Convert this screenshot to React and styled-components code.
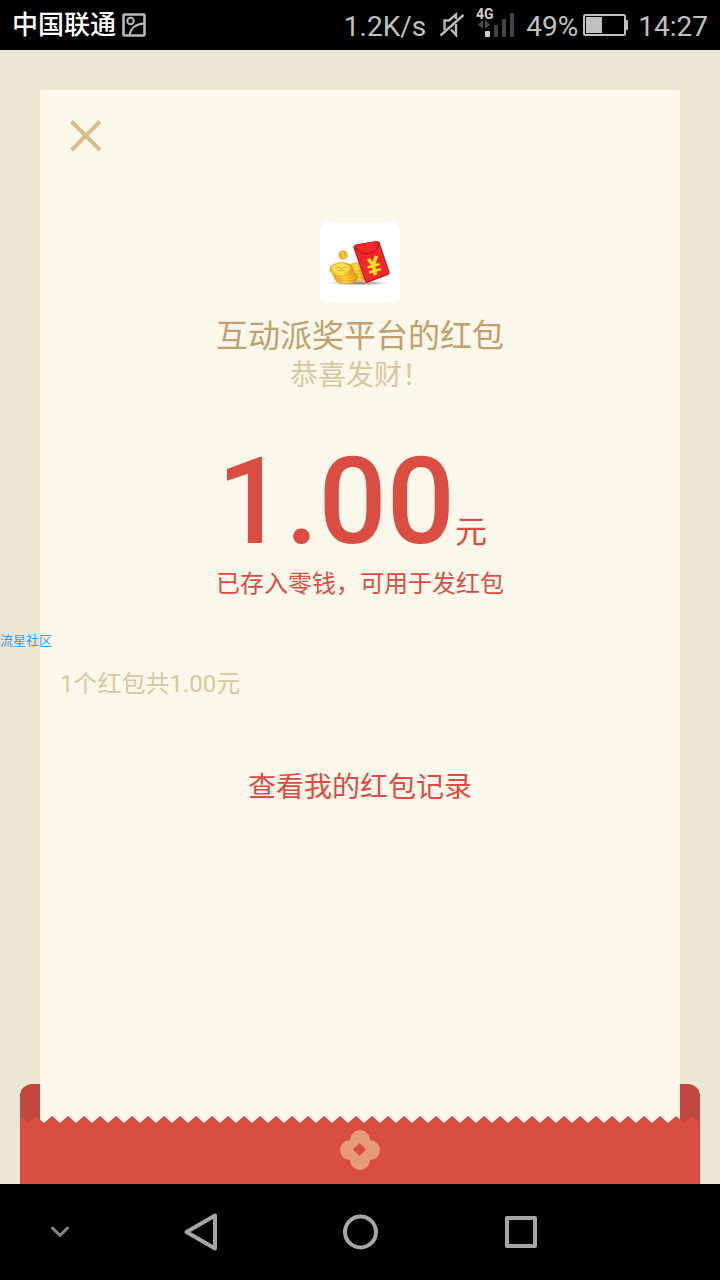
import React from 'react';
import styled, { createGlobalStyle } from 'styled-components';

const GlobalStyle = createGlobalStyle`
  *, *::before, *::after { box-sizing: border-box; }
  body {
    margin: 0;
    background: #000;
    font-family: Roboto, "Noto Sans CJK SC", sans-serif;
  }
  button { font: inherit; }
`;

const Screen = styled.div`
  position: relative;
  min-height: 100vh;
  display: flex;
  flex-direction: column;
  background: #ede6d3;
`;

const StatusBar = styled.header`
  height: 50px;
  padding: 0 12px;
  display: flex;
  align-items: center;
  justify-content: space-between;
  background: #000;
  color: #c0c0c0;
  font-size: 28px;
  line-height: 32px;
  white-space: nowrap;
`;

const StatusGroup = styled.div`
  display: flex;
  align-items: center;
  gap: ${(p) => p.$gap}px;
`;

const Carrier = styled.span`
  color: #fff;
  font-size: 26px;
  font-weight: 500;
`;

const StatusText = styled.span`
  padding-top: 4px;
`;

const BatteryGroup = styled.div`
  display: flex;
  align-items: center;
  gap: 5px;
`;

const Glyph = styled.svg`
  display: block;
  flex: none;
`;

const Main = styled.main`
  flex: 1;
  display: flex;
  flex-direction: column;
  padding-top: 40px;
`;

const Card = styled.section`
  flex: 1;
  margin: 0 40px;
  padding: 26px 20px 0;
  display: flex;
  flex-direction: column;
  align-items: center;
  background: #fbf7ea;
`;

const CloseButton = styled.button`
  align-self: flex-start;
  width: 40px;
  height: 40px;
  margin-left: 6px;
  padding: 0;
  border: 0;
  background: none;
  cursor: pointer;
`;

const Avatar = styled.div`
  width: 80px;
  height: 80px;
  margin-top: 66px;
  border-radius: 8px;
  overflow: hidden;
  background: #fff;
`;

const Title = styled.h1`
  margin: 14px 0 0;
  font-size: 32px;
  line-height: 40px;
  font-weight: 400;
  color: #c0a06e;
`;

const Greeting = styled.p`
  margin: 0;
  font-size: 28px;
  line-height: 40px;
  color: #dac7a1;
`;

const Amount = styled.p`
  margin: 46px 0 0;
  padding-right: 16px;
  display: flex;
  align-items: baseline;
  color: #da4d43;
`;

const AmountValue = styled.span`
  font-size: 120px;
  line-height: 120px;
  font-weight: 500;
`;

const AmountUnit = styled.span`
  font-size: 32px;
  line-height: 32px;
`;

const Notice = styled.p`
  margin: 2px 0 0;
  font-size: 24px;
  line-height: 40px;
  color: #da4d43;
`;

const Summary = styled.p`
  align-self: stretch;
  margin: 60px 0 0;
  font-size: 24px;
  line-height: 40px;
  color: #dac7a1;
`;

const RecordsLink = styled.a`
  margin-top: 64px;
  font-size: 28px;
  line-height: 40px;
  color: #da4d43;
  text-decoration: none;
`;

const Envelope = styled.div`
  margin: 0 20px;
  padding-top: 32px;
  border-radius: 12px 12px 0 0;
  background: linear-gradient(
    to right,
    #c1483f 20px,
    #fbf7ea 20px,
    #fbf7ea calc(100% - 20px),
    #c1483f calc(100% - 20px)
  );
`;

const EnvelopeFront = styled.div`
  height: 61px;
  padding-top: 7px;
  display: flex;
  justify-content: center;
  background: #da4d43;
`;

const NavBar = styled.nav`
  height: 96px;
  padding: 0 20px;
  display: flex;
  align-items: center;
  background: #000;
`;

const NavButton = styled.button`
  width: 80px;
  height: 80px;
  margin-right: ${(p) => p.$after || 0}px;
  padding: 0;
  display: flex;
  align-items: center;
  justify-content: center;
  border: 0;
  background: none;
  cursor: pointer;
`;

const Watermark = styled.span`
  position: absolute;
  left: 0;
  top: 633px;
  font-size: 13px;
  line-height: 16px;
  color: #2fa0f5;
`;

function PictureIcon() {
  return (
    <Glyph width="24" height="24" viewBox="0 0 24 24" fill="none" stroke="#b9b9b9" strokeWidth="2">
      <rect x="1.5" y="1.5" width="21" height="21" rx="1" strokeWidth="2.6" />
      <circle cx="8.5" cy="8" r="3.2" />
      <path d="M7.5 22C9 15 14 11 22 10.5" />
    </Glyph>
  );
}

function MuteIcon() {
  return (
    <Glyph width="30" height="26" viewBox="-4 0 30 26" fill="none" stroke="#b9b9b9" strokeWidth="2.4">
      <path d="M4.500 18V8.500H9L16 2.500V7" />
      <path d="M11 17.500l5 5.500V12" />
      <path d="M0.500 23.500L23.500 3" />
    </Glyph>
  );
}

function SignalIcon() {
  return (
    <Glyph width="40" height="36" viewBox="0 0 40 36">
      <text x="0" y="12" fontSize="14" fontWeight="700" fill="#d0d0d0">4G</text>
      <path d="M7 13v9l-5-4.500zM9 13v9l5-4.500z" fill="#4a4a4a" />
      <rect x="9" y="24" width="5" height="6" rx="1" fill="#d0d0d0" />
      <rect x="18" y="18" width="4" height="12" rx="1" fill="#444" />
      <rect x="26" y="12" width="4" height="18" rx="1" fill="#444" />
      <rect x="34" y="6" width="4" height="24" rx="1" fill="#444" />
    </Glyph>
  );
}

function BatteryIcon() {
  return (
    <Glyph width="45" height="22" viewBox="0 0 45 22">
      <rect x="1" y="1" width="41" height="20" rx="1.500" fill="none" stroke="#c0c0c0" strokeWidth="2" />
      <rect x="3" y="3" width="16" height="16" fill="#c0c0c0" />
      <path d="M42 6h2a1 1 0 0 1 1 1v8a1 1 0 0 1-1 1h-2z" fill="#c0c0c0" />
    </Glyph>
  );
}

function RedPacketPicture() {
  return (
    <Glyph width="80" height="80" viewBox="0 0 80 80" role="img" aria-label="红包">
      <defs>
        <linearGradient id="gold" x1="0" x2="1">
          <stop offset="0" stopColor="#f6b512" />
          <stop offset=".5" stopColor="#ffe04a" />
          <stop offset="1" stopColor="#e59a0c" />
        </linearGradient>
        <radialGradient id="shade">
          <stop offset="0" stopColor="#6d4a3c" stopOpacity=".8" />
          <stop offset="1" stopColor="#6d4a3c" stopOpacity="0" />
        </radialGradient>
      </defs>
      <ellipse cx="39" cy="61" rx="30" ry="2.500" fill="url(#shade)" />
      <g fill="url(#gold)" stroke="#d58a08" strokeWidth=".6">
        <ellipse cx="38" cy="55" rx="9" ry="4" />
        <ellipse cx="38" cy="52" rx="9" ry="4" />
        <ellipse cx="37" cy="48" rx="9" ry="4" />
        <ellipse cx="37" cy="45" rx="8" ry="4" />
        <ellipse cx="26" cy="57" rx="11" ry="4.500" />
        <ellipse cx="26" cy="54.500" rx="12" ry="4.500" />
        <ellipse cx="24" cy="52" rx="11" ry="5" />
        <ellipse cx="21.500" cy="47.500" rx="11.500" ry="7" />
      </g>
      <ellipse cx="21" cy="46.500" rx="9" ry="4.500" fill="#ffe357" />
      <path d="M15 46l4-1 2 2 4-2 3 1M17 49l4-1 4 1" fill="none" stroke="#e3ab22" strokeWidth="1" />
      <circle cx="23" cy="33" r="4.200" fill="#f3b51b" stroke="#dc9107" strokeWidth=".5" />
      <path d="M21 31l3 1-1 2 2 1" fill="none" stroke="#fff07a" strokeWidth="1" />
      <path d="M36 22.500L57 19q2-.3 2.600 1.600L69.500 50q.5 2-1.300 3L48 60.500q-2 .6-3-1.300L33.500 26q-.6-2.500 2.500-3.500z" fill="#c8101c" />
      <path d="M36.500 22.500L56 19q1.700-.3 2.300 1.400L68.500 50q.4 1.500-1.200 2.200L48 59q-1.600.5-2.300-1L34.500 25.500q-.5-2.300 2-3z" fill="#f4262e" />
      <path d="M35.500 25c4 6 9 7.500 14 6.500 5.500-1.200 9-5 9-10.500" fill="none" stroke="#b80f1a" strokeWidth="1.200" />
      <g fill="none" stroke="#ffe21a" strokeWidth="3.600">
        <path d="M48.500 37l4.500 6.500L56.500 34" />
        <path d="M53 42l2.500 11" />
        <path d="M47.500 45.500l12-3.500M49 50.500l12-3.500" strokeWidth="2.400" />
      </g>
    </Glyph>
  );
}

function ZigzagEdge() {
  return (
    <Glyph width="100%" height="7" aria-hidden="true">
      <defs>
        <pattern id="teeth" width="16" height="7" patternUnits="userSpaceOnUse">
          <path d="M0 0L8 7L16 0V7H0z" fill="#da4d43" />
        </pattern>
      </defs>
      <rect width="100%" height="7" fill="url(#teeth)" />
    </Glyph>
  );
}

function BlossomIcon() {
  return (
    <Glyph width="40" height="40" viewBox="0 0 40 40">
      <g fill="#e59b79">
        <circle cx="20" cy="10" r="10" />
        <circle cx="20" cy="30" r="10" />
        <circle cx="10" cy="20" r="10" />
        <circle cx="30" cy="20" r="10" />
      </g>
      <path d="M19.500 13l6.500 6.500L19.500 26l-6.500-6.500z" fill="#da4d43" />
    </Glyph>
  );
}

export default function App() {
  return (
    <Screen>
      <GlobalStyle />
      <StatusBar>
        <StatusGroup $gap={6}>
          <Carrier>中国联通</Carrier>
          <PictureIcon />
        </StatusGroup>
        <StatusGroup $gap={10}>
          <StatusText>1.2K/s</StatusText>
          <MuteIcon />
          <SignalIcon />
          <BatteryGroup>
            <StatusText>49%</StatusText>
            <BatteryIcon />
          </BatteryGroup>
          <StatusText>14:27</StatusText>
        </StatusGroup>
      </StatusBar>

      <Main>
        <Card>
          <CloseButton type="button" aria-label="关闭">
            <Glyph width="40" height="40" viewBox="0 0 40 40" stroke="#d9bd87" strokeWidth="4">
              <path d="M5.500 5.500L34 34M34 5.500L5.500 34" />
            </Glyph>
          </CloseButton>
          <Avatar>
            <RedPacketPicture />
          </Avatar>
          <Title>互动派奖平台的红包</Title>
          <Greeting>恭喜发财！</Greeting>
          <Amount>
            <AmountValue>1.00</AmountValue>
            <AmountUnit>元</AmountUnit>
          </Amount>
          <Notice>已存入零钱，可用于发红包</Notice>
          <Summary>1个红包共1.00元</Summary>
          <RecordsLink href="#records">查看我的红包记录</RecordsLink>
        </Card>
        <Envelope>
          <ZigzagEdge />
          <EnvelopeFront>
            <BlossomIcon />
          </EnvelopeFront>
        </Envelope>
      </Main>

      <NavBar>
        <NavButton type="button" aria-label="收起" $after={60}>
          <Glyph width="20" height="12" viewBox="0 0 20 12" fill="none" stroke="#858585" strokeWidth="3" strokeLinecap="round" strokeLinejoin="round">
            <path d="M2.500 2L10 9.500L17.500 2" />
          </Glyph>
        </NavButton>
        <NavButton type="button" aria-label="返回" $after={80}>
          <Glyph width="36" height="40" viewBox="0 0 36 40" fill="none" stroke="#a6a6a6" strokeWidth="4" strokeLinejoin="round">
            <path d="M33 3.500V36.500L4.500 20z" />
          </Glyph>
        </NavButton>
        <NavButton type="button" aria-label="主页" $after={80}>
          <Glyph width="36" height="36" viewBox="0 0 36 36" fill="none" stroke="#a6a6a6" strokeWidth="4">
            <circle cx="18.500" cy="18" r="15.500" />
          </Glyph>
        </NavButton>
        <NavButton type="button" aria-label="最近任务">
          <Glyph width="34" height="32" viewBox="0 0 34 32" fill="none" stroke="#a6a6a6" strokeWidth="4" strokeLinejoin="round">
            <rect x="4" y="2" width="28" height="28" />
          </Glyph>
        </NavButton>
      </NavBar>

      <Watermark>流星社区</Watermark>
    </Screen>
  );
}
